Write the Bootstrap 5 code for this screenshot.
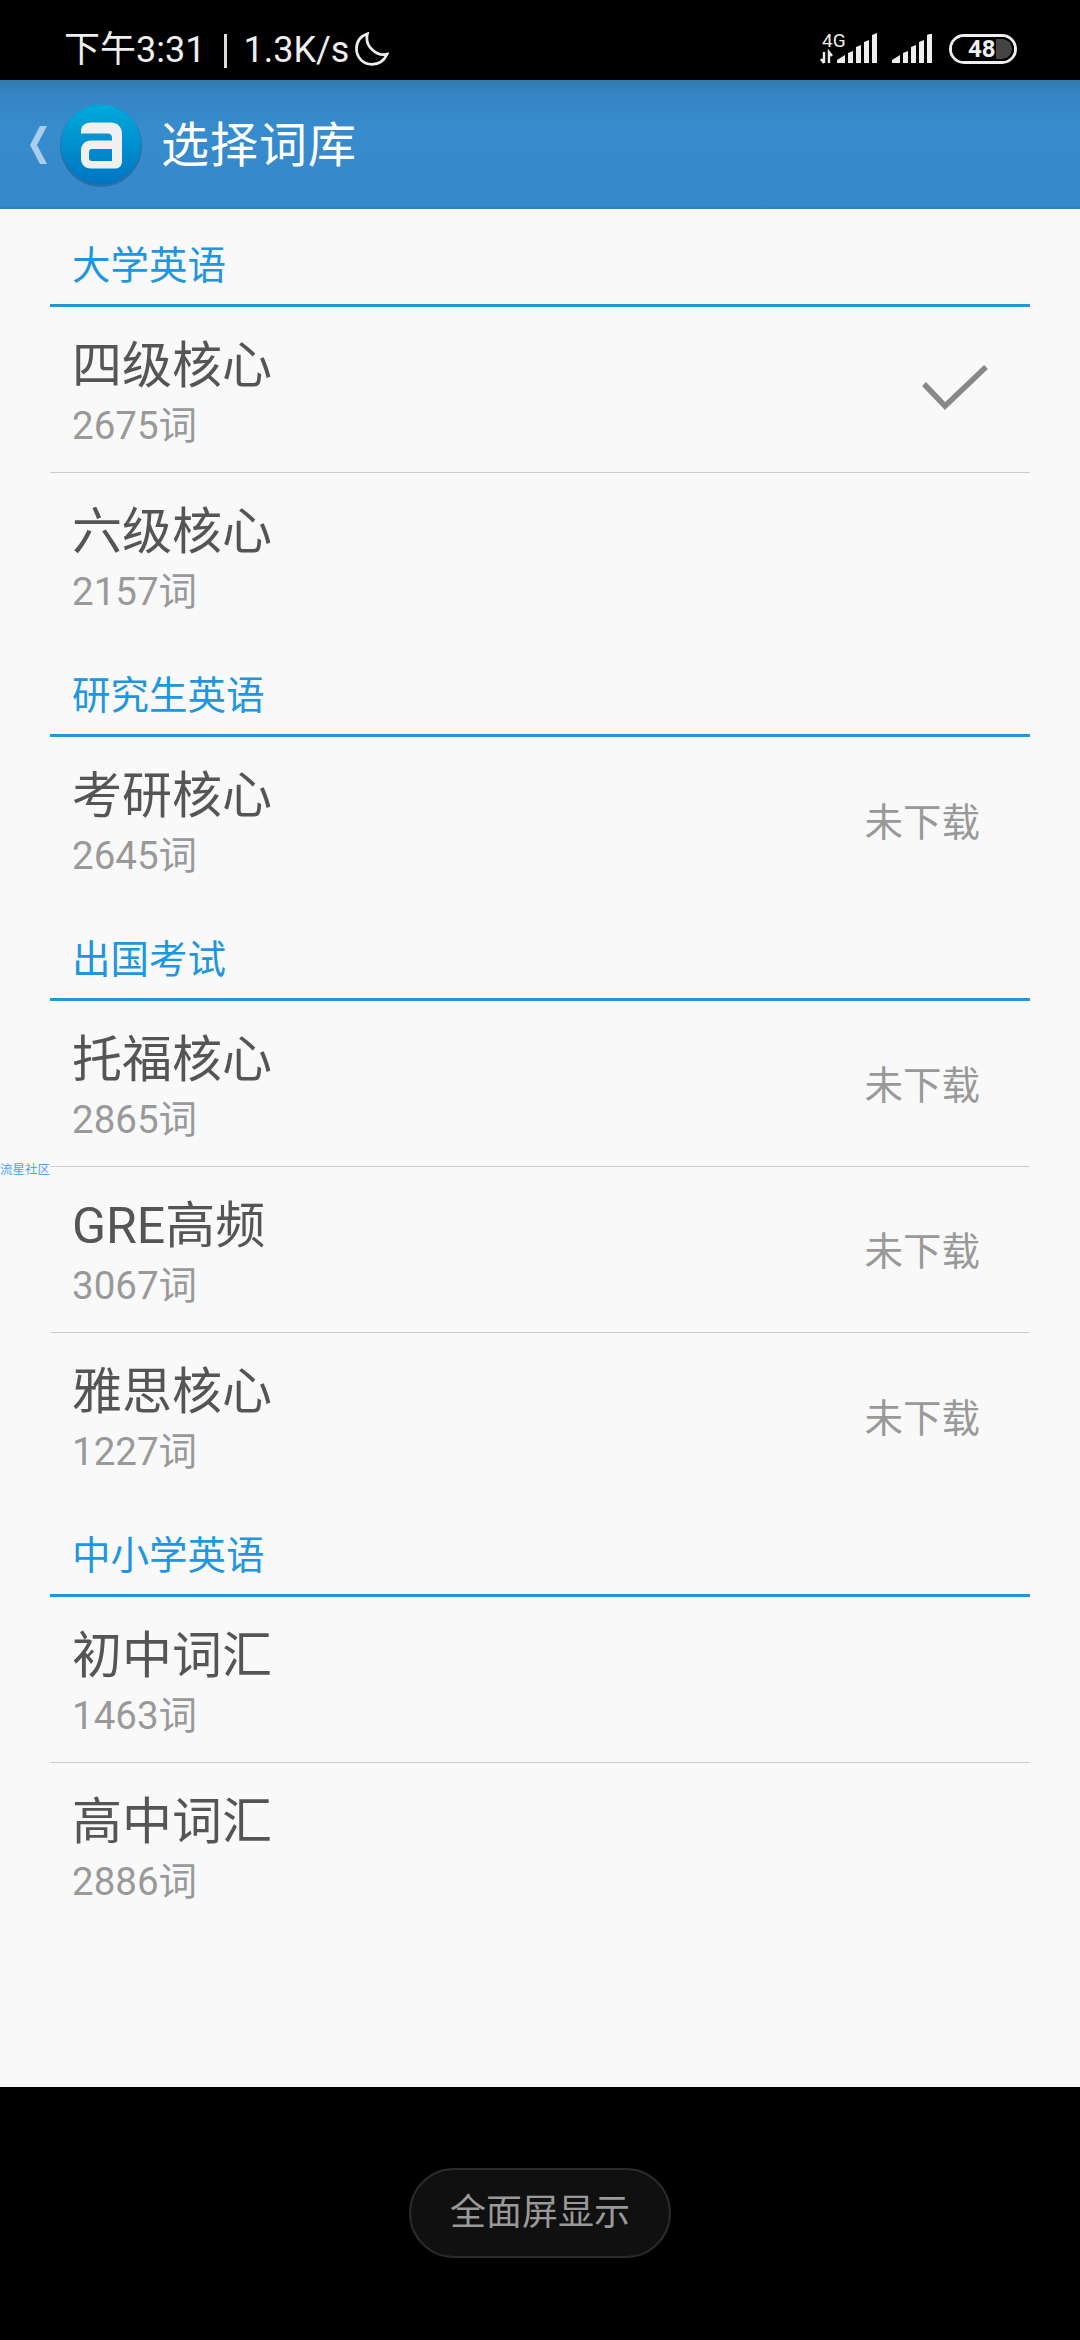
<!DOCTYPE html>
<html lang="zh">
<head>
    <title>选择词库</title>
    <meta charset="UTF-8">
    <meta name="viewport" content="width=device-width, initial-scale=1.0">
    <link href="https://cdn.jsdelivr.net/npm/bootstrap@5.3.0/dist/css/bootstrap.min.css" rel="stylesheet">
    <style>
        body {
            background: #000;
            font-family: Roboto, "Noto Sans CJK SC", sans-serif;
        }

        .phone {
            width: 1080px;
            height: 2340px;
            position: relative;
            overflow: hidden;
        }

        .status-bar {
            height: 80px;
            background: #000;
            color: #eee;
            font-size: 36px;
            line-height: 1;
            padding: 32px 0 0 64px;
        }

        .status-sep {
            width: 3px;
            height: 34px;
            background: #ddd;
            margin: 2px 16px 0 19px;
        }

        .moon {
            margin-left: 6px;
        }

        .status-icons {
            margin-left: auto;
            margin-right: 63px;
        }

        .sig-main {
            margin-top: -6px;
        }

        .sig-sub {
            margin: 2px 0 0 14px;
        }

        .batt {
            width: 68px;
            height: 30px;
            border: 3px solid #eee;
            border-radius: 15px;
            margin: 2px 0 0 16px;
            font-size: 24px;
            font-weight: 700;
        }

        .batt-fill {
            width: 100%;
            height: 100%;
            border: 2px solid #000;
            border-radius: 12px;
            background: linear-gradient(90deg, #000 72%, #444 72%);
            padding-left: 14px;
            line-height: 20px;
        }

        .app-head {
            height: 129px;
            background: linear-gradient(180deg, #3179ad 0, #3585c2 14px, #378ccd 50px, #3588c9 126px, #2f7db8 129px);
            color: #fff;
            font-size: 48px;
            padding-left: 30px;
        }

        .app-logo {
            margin-left: 11px;
        }

        .app-title {
            margin-left: 18px;
            margin-top: 2px;
            letter-spacing: 1px;
        }

        .word-list {
            height: 1878px;
            background: #f9f9f9;
            padding: 0 50px;
        }

        .sec-title {
            height: 95px;
            color: #2196e0;
            font-size: 38.500px;
            line-height: 1;
            padding: 38px 0 0 22px;
        }

        .sec-list {
            border-top: 3px solid #2196e0;
        }

        .word-row {
            height: 166px;
            padding: 0 50px 0 22px;
            border-bottom: 1px solid #ccc;
        }

        .word-row:last-child {
            border-bottom: 0;
        }

        .word-text {
            padding-top: 12px;
        }

        .word-name {
            color: #555;
            font-size: 50px;
            line-height: 60px;
        }

        .word-count {
            color: #999;
            font-size: 38.500px;
            line-height: 60px;
        }

        .word-state {
            color: #999;
            font-size: 38.500px;
            padding-top: 5px;
        }

        .word-check {
            margin-right: -8px;
        }

        .watermark {
            position: absolute;
            left: 0;
            top: 1164px;
            color: #4aa6f2;
            font-size: 12.500px;
            line-height: 1;
        }

        .full-btn {
            width: 262px;
            height: 90px;
            margin: 81px auto 0;
            background: #101010;
            border: 2px solid #2b2b2b;
            border-radius: 45px;
            color: #999;
            font-size: 36px;
        }
    </style>
</head>

<body>
    <div class="phone">
        <div class="status-bar d-flex align-items-start">
            <span>下午3:31</span>
            <span class="status-sep"></span>
            <span>1.3K/s</span>
            <svg class="moon" width="34" height="34" viewBox="0 0 30 30" fill="none" stroke="#eee" stroke-width="2.400">
                <path d="M11 1.500C5 3.500 1.300 8.500 1.300 15c0 7.500 6 13.500 13.500 13.500 6 0 11-3.500 13.500-9C19.500 22 8 13 11 1.500z"/>
            </svg>
            <div class="status-icons d-flex align-items-start">
                <svg class="sig-main" width="60" height="38" viewBox="0 -8 60 38" fill="#eee">
                    <text x="4" y="13" font-size="19" font-family="Roboto">4G</text>
                    <path d="M6 18v11M3 25l3 4M11 29V18l3 4" stroke="#eee" stroke-width="2.400" fill="none"/>
                    <path d="M19 29v-3l8-5v8zM30 29V19l5-2v12zM38 29V13l5-2v18zM46 29V8l5-2v23zM54 29V1l5-2v30z"/>
                </svg>
                <svg class="sig-sub" width="41" height="30" viewBox="0 0 41 30" fill="#eee">
                    <path d="M0 29v-3l8-5v8zM11 29V19l5-2v12zM19 29V13l5-2v18zM27 29V8l5-2v23zM35 29V1l5-2v30z"/>
                </svg>
                <div class="batt">
                    <div class="batt-fill">48</div>
                </div>
            </div>
        </div>

        <div class="app-head d-flex align-items-center">
            <svg width="18" height="38" viewBox="0 0 18 38" fill="#a9cdeb">
                <path d="M10 0h7L7 19l10 19h-7L0 19z"/>
            </svg>
            <svg class="app-logo" width="84" height="84" viewBox="0 0 84 84">
                <defs>
                    <linearGradient id="logoBg" x1="0" y1="0" x2="0" y2="1">
                        <stop offset="0" stop-color="#00abdc"/>
                        <stop offset="1" stop-color="#0074c2"/>
                    </linearGradient>
                </defs>
                <circle cx="42" cy="43" r="41" fill="#2a6fa3"/>
                <circle cx="42" cy="41.500" r="40" fill="url(#logoBg)"/>
                <path fill="#f0f0f0" fill-rule="evenodd" d="M32 19.500h19c8 0 12 4.500 12 12V58c0 5-3 7.500-7 7.500H32c-6 0-10-4-10-10v-8c0-6 4-10 10-10h21V35c0-3-1.500-4.500-4.500-4.500H22V28c0-5 4-8.500 10-8.500zM33 46c-2 0-3 1-3 3v6c0 2 1 3 3 3h20V46z"/>
            </svg>
            <span class="app-title">选择词库</span>
        </div>

        <div class="word-list">
            <div class="sec-title">大学英语</div>
            <div class="sec-list">
                <div class="word-row d-flex align-items-center justify-content-between">
                    <div class="word-text">
                        <div class="word-name">四级核心</div>
                        <div class="word-count">2675词</div>
                    </div>
                    <svg class="word-check" width="66" height="50" viewBox="0 0 66 50" fill="none" stroke="#888" stroke-width="5.500">
                        <path d="M2 19l21 22L64 2"/>
                    </svg>
                </div>
                <div class="word-row d-flex align-items-center justify-content-between">
                    <div class="word-text">
                        <div class="word-name">六级核心</div>
                        <div class="word-count">2157词</div>
                    </div>
                </div>
            </div>

            <div class="sec-title">研究生英语</div>
            <div class="sec-list">
                <div class="word-row d-flex align-items-center justify-content-between">
                    <div class="word-text">
                        <div class="word-name">考研核心</div>
                        <div class="word-count">2645词</div>
                    </div>
                    <div class="word-state">未下载</div>
                </div>
            </div>

            <div class="sec-title">出国考试</div>
            <div class="sec-list">
                <div class="word-row d-flex align-items-center justify-content-between">
                    <div class="word-text">
                        <div class="word-name">托福核心</div>
                        <div class="word-count">2865词</div>
                    </div>
                    <div class="word-state">未下载</div>
                </div>
                <div class="word-row d-flex align-items-center justify-content-between">
                    <div class="word-text">
                        <div class="word-name">GRE高频</div>
                        <div class="word-count">3067词</div>
                    </div>
                    <div class="word-state">未下载</div>
                </div>
                <div class="word-row d-flex align-items-center justify-content-between">
                    <div class="word-text">
                        <div class="word-name">雅思核心</div>
                        <div class="word-count">1227词</div>
                    </div>
                    <div class="word-state">未下载</div>
                </div>
            </div>

            <div class="sec-title">中小学英语</div>
            <div class="sec-list">
                <div class="word-row d-flex align-items-center justify-content-between">
                    <div class="word-text">
                        <div class="word-name">初中词汇</div>
                        <div class="word-count">1463词</div>
                    </div>
                </div>
                <div class="word-row d-flex align-items-center justify-content-between">
                    <div class="word-text">
                        <div class="word-name">高中词汇</div>
                        <div class="word-count">2886词</div>
                    </div>
                </div>
            </div>
        </div>

        <div class="full-btn d-flex align-items-center justify-content-center">全面屏显示</div>
        <div class="watermark">流星社区</div>
    </div>

    <script src="https://cdn.jsdelivr.net/npm/bootstrap@5.3.0/dist/js/bootstrap.bundle.min.js"></script>
</body>
</html>
